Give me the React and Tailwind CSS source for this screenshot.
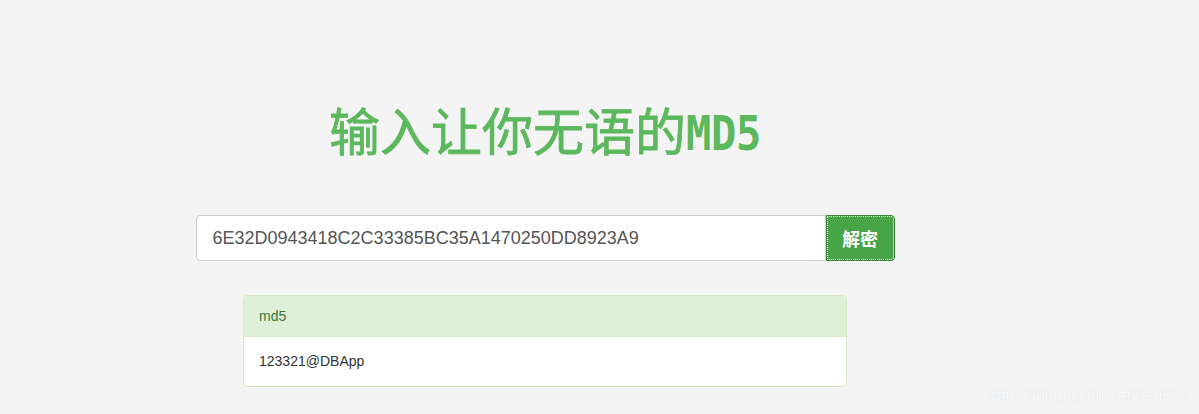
import React from "react";

const App = () => {
	const hash = "6E32D0943418C2C33385BC35A1470250DD8923A9";

	return (
		<div className="relative w-full h-[414px] bg-[#f4f4f4] overflow-hidden font-['Liberation_Sans',Arial,sans-serif]">
			<div className="w-[1090px] flex flex-col items-center pt-[104px]">
				<h1 className="h-[51px] flex items-baseline leading-none text-[#5cb85c] select-none">
					<span className="text-[51px] font-normal [-webkit-text-stroke:0.8px_#5cb85c] font-['Noto_Sans_CJK_SC',sans-serif]">
						输入让你无语的
					</span>
					<span className="inline-block origin-bottom scale-y-[1.15] text-[42px] font-bold tracking-[-0.3px] font-['DejaVu_Sans_Mono',monospace]">
						MD5
					</span>
				</h1>

				<div className="mt-[60px] w-[699px] h-[46px] flex">
					<input
						type="text"
						defaultValue={hash}
						className="flex-1 h-full px-4 bg-white border border-[#cccccc] rounded-l-[4px] text-[18px] text-[#555555] outline-none"
					/>
					<button className="w-[69px] h-full bg-[#47a447] border border-[#398439] rounded-r-[4px] outline-dotted outline-1 outline-white -outline-offset-2 text-white text-[18px] font-bold font-['Noto_Sans_CJK_SC',sans-serif]">
						解密
					</button>
				</div>

				<div className="mt-[34px] w-[604px] bg-white border border-[#d6e9c6] rounded-[4px] overflow-hidden text-[14px]">
					<div className="h-[41px] px-[15px] flex items-center bg-[#dff0d8] border-b border-[#d6e9c6] text-[#3c763d]">
						md5
					</div>
					<div className="h-[49px] px-[15px] flex items-center text-[#333333]">
						123321@DBApp
					</div>
				</div>
			</div>

			<div className="absolute right-[9px] bottom-[6px] text-[16px] text-[#fafafa] [text-shadow:0_0_1px_#d0d0d0] select-none">
				https://blog.csdn.net/YenKoc
			</div>
		</div>
	);
};

export default App;
